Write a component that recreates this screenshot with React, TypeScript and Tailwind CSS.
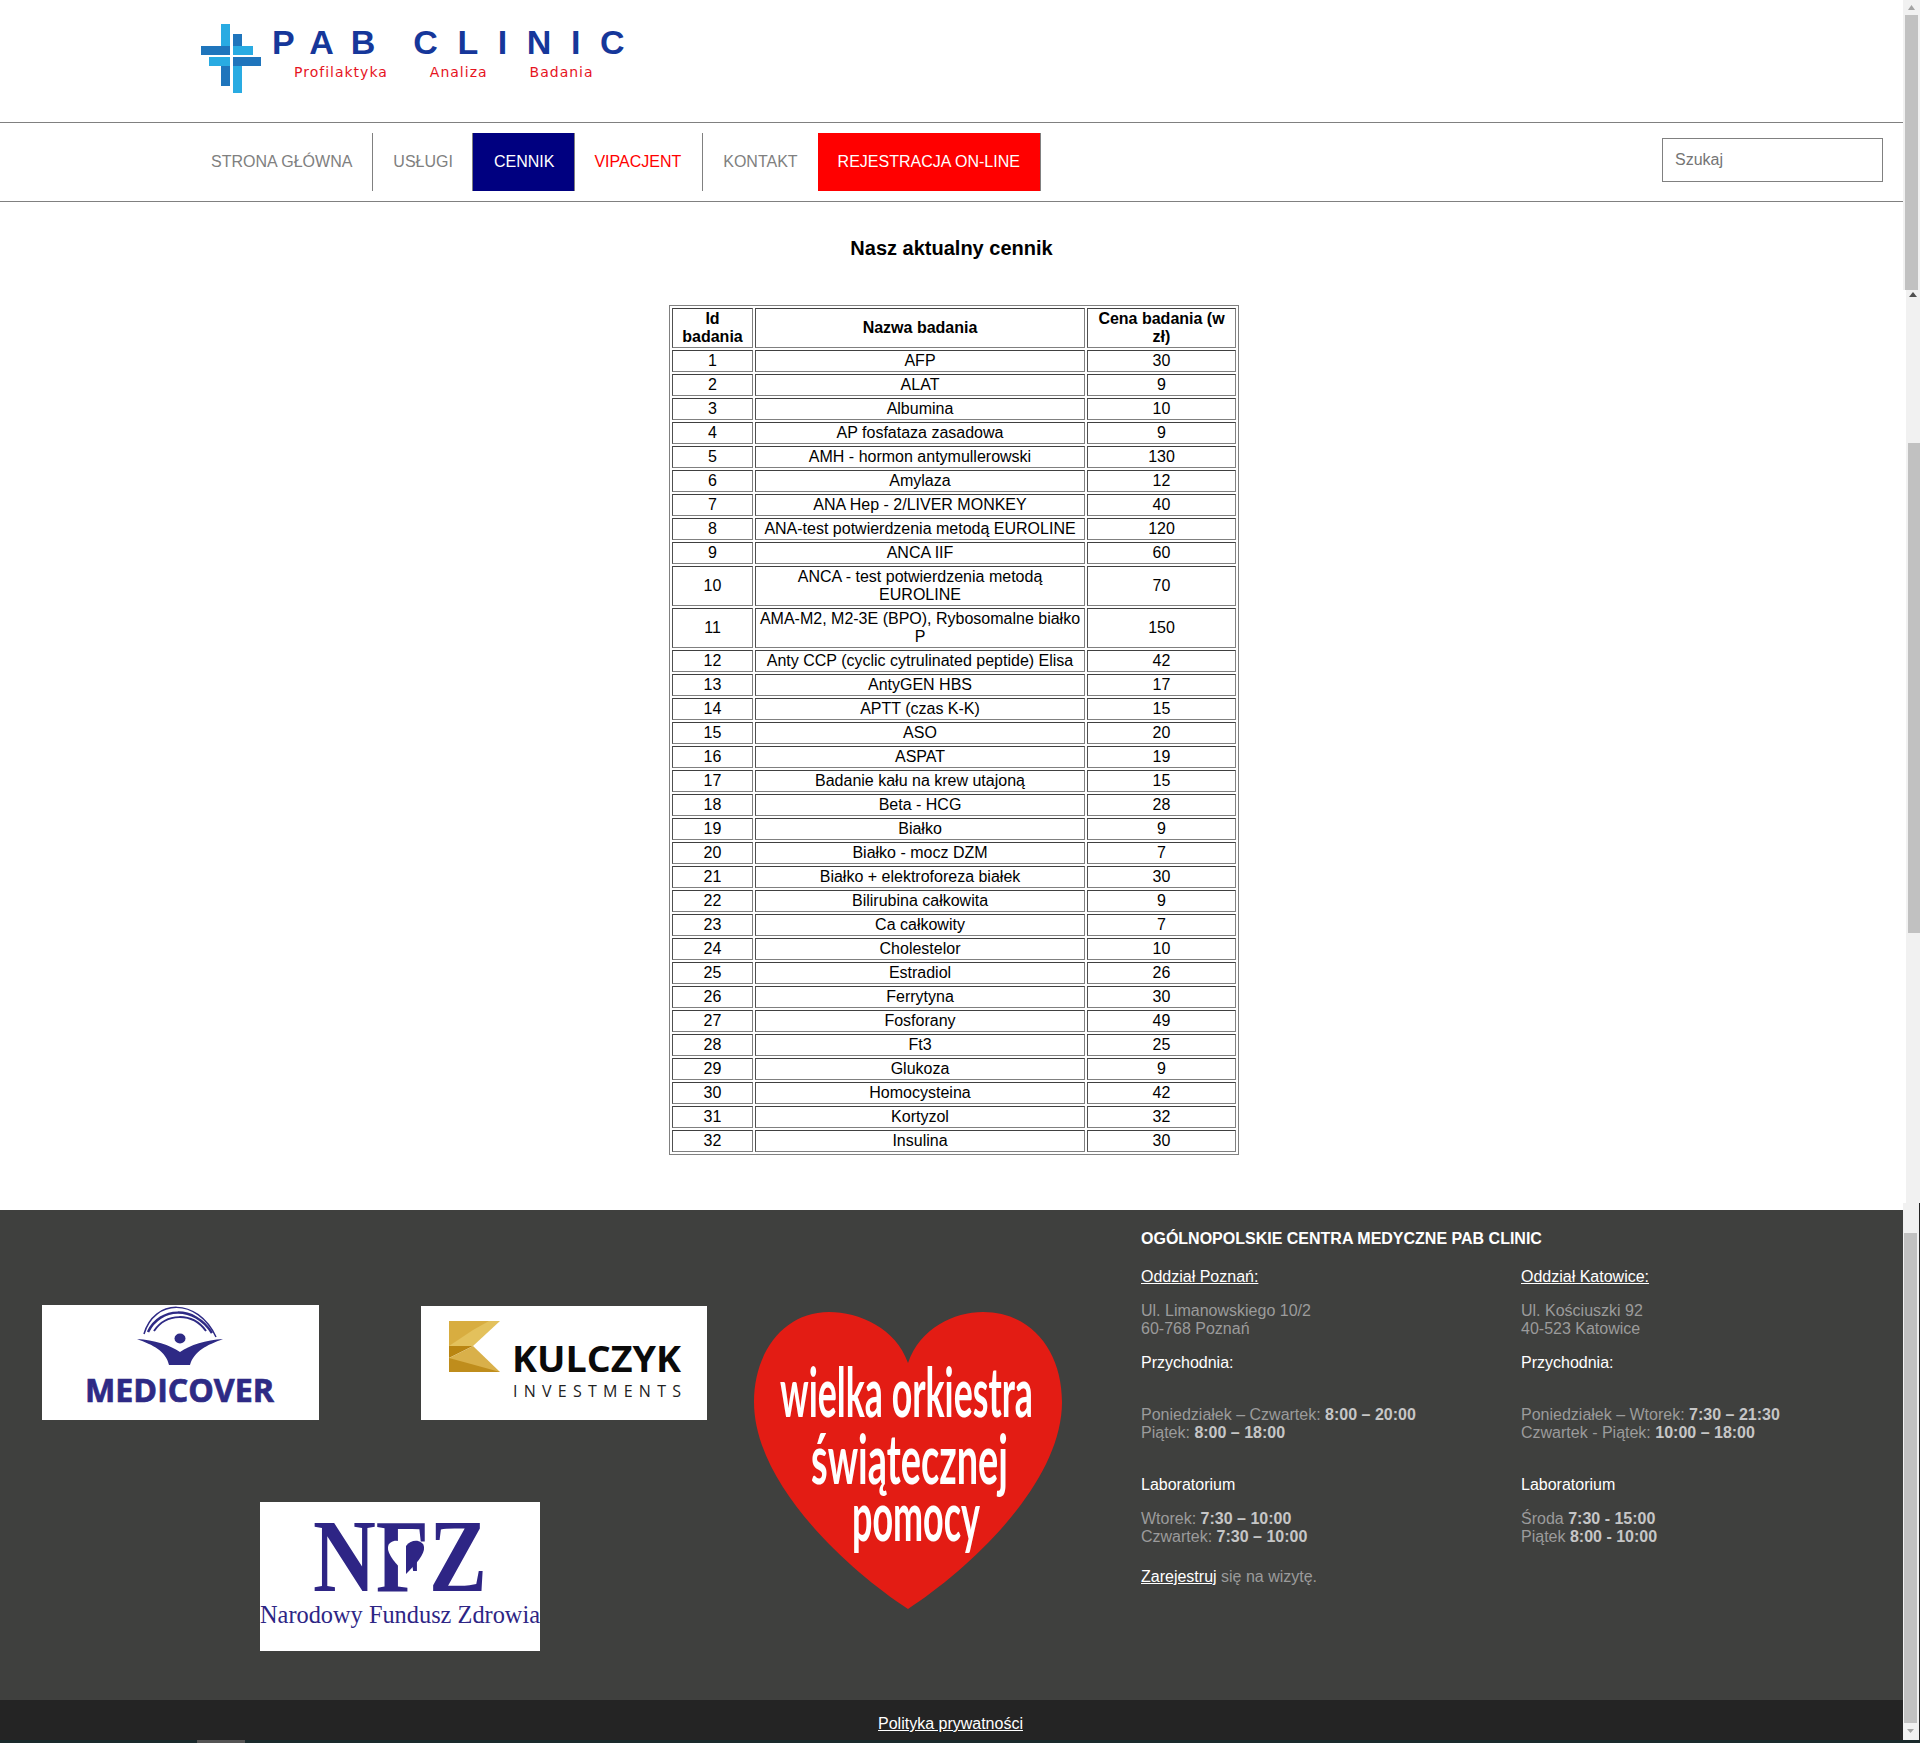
const rows: [string, number][] = [
  ["AFP", 30],
  ["ALAT", 9],
  ["Albumina", 10],
  ["AP fosfataza zasadowa", 9],
  ["AMH - hormon antymullerowski", 130],
  ["Amylaza", 12],
  ["ANA Hep - 2/LIVER MONKEY", 40],
  ["ANA-test potwierdzenia metodą EUROLINE", 120],
  ["ANCA IIF", 60],
  ["ANCA - test potwierdzenia metodą EUROLINE", 70],
  ["AMA-M2, M2-3E (BPO), Rybosomalne białko P", 150],
  ["Anty CCP (cyclic cytrulinated peptide) Elisa", 42],
  ["AntyGEN HBS", 17],
  ["APTT (czas K-K)", 15],
  ["ASO", 20],
  ["ASPAT", 19],
  ["Badanie kału na krew utajoną", 15],
  ["Beta - HCG", 28],
  ["Białko", 9],
  ["Białko - mocz DZM", 7],
  ["Białko + elektroforeza białek", 30],
  ["Bilirubina całkowita", 9],
  ["Ca całkowity", 7],
  ["Cholestelor", 10],
  ["Estradiol", 26],
  ["Ferrytyna", 30],
  ["Fosforany", 49],
  ["Ft3", 25],
  ["Glukoza", 9],
  ["Homocysteina", 42],
  ["Kortyzol", 32],
  ["Insulina", 30],
];

const cell =
  "border border-[#808080] border-t-[#404040] border-l-[#505050] p-px text-center";

const CrossLogo = () => (
  <svg width="60" height="69" viewBox="0 0 60 69" className="shrink-0">
    <rect x="20" y="0" width="9" height="22" fill="#29abe2" />
    <rect x="32" y="10" width="9" height="12" fill="#1f75bc" />
    <rect x="0" y="22" width="29" height="9" fill="#1f75bc" />
    <rect x="32" y="22" width="20" height="9" fill="#29abe2" />
    <rect x="8" y="33" width="21" height="9" fill="#29abe2" />
    <rect x="32" y="33" width="28" height="9" fill="#1f75bc" />
    <rect x="20" y="42" width="9" height="20" fill="#1f75bc" />
    <rect x="32" y="42" width="9" height="27" fill="#29abe2" />
  </svg>
);

const Medicover = () => (
  <svg width="277" height="115" viewBox="0 0 277 115" className="bg-white">
    <g fill="none" stroke="#2e2a85">
      <path d="M102 29 C112 -6 155 -8 174 32" strokeWidth="1.5" />
      <path d="M106 27 C118 2 152 0 170 28" strokeWidth="2.5" />
      <path d="M112 26 C124 8 150 7 164 26" strokeWidth="2" />
    </g>
    <ellipse cx="138" cy="33.5" rx="5.5" ry="5" fill="#2e2a85" />
    <path
      d="M95 34 C112 35 128 40 138 47 C148 40 164 35 181 34 C165 40 152 46 148 60 L127 60 C124 46 111 40 95 34Z"
      fill="#2e2a85"
    />
    <text
      x="43"
      y="97"
      textLength="189"
      lengthAdjust="spacingAndGlyphs"
      fontFamily="'Open Sans', sans-serif"
      fontWeight="700"
      fontSize="32"
      fill="#2e2a85"
      stroke="#2e2a85"
      strokeWidth="0.7"
    >
      MEDICOVER
    </text>
  </svg>
);

const Kulczyk = () => (
  <svg width="286" height="114" viewBox="0 0 286 114" className="mt-px bg-white">
    <polygon points="28,15 79,15 52,40 28,40" fill="#e3c15c" />
    <polygon points="28,15 28,40 52,24 68,15" fill="#c9951f" opacity="0.45" />
    <polygon points="28,40 52,40 28,52" fill="#b98512" />
    <polygon points="28,52 52,40 79,66 28,66" fill="#d9b04a" />
    <polygon points="28,52 50,58 79,66 28,66" fill="#bf8d1c" />
    <text
      x="91"
      y="66"
      textLength="169"
      lengthAdjust="spacingAndGlyphs"
      fontFamily="'Open Sans', sans-serif"
      fontWeight="700"
      fontSize="36"
      fill="#0a0a0a"
    >
      KULCZYK
    </text>
    <text
      x="92"
      y="91"
      textLength="168"
      lengthAdjust="spacing"
      fontFamily="'Open Sans', sans-serif"
      fontSize="16"
      fill="#222"
    >
      INVESTMENTS
    </text>
  </svg>
);

const Nfz = () => (
  <svg width="280" height="149" viewBox="0 0 280 149" className="bg-white">
    <text
      x="53"
      y="89"
      textLength="174"
      lengthAdjust="spacingAndGlyphs"
      fontFamily="'Liberation Serif', serif"
      fontWeight="700"
      fontSize="103"
      fill="#2e2585"
    >
      NFZ
    </text>
    <path d="M146 72 C136 62 127 52 128 45 C129 38 140 36 146 44Z" fill="#fff" />
    <path d="M146 72 C156 62 165 52 164 45 C163 38 152 36 146 44Z" fill="#2e2585" />
    <text
      x="0"
      y="121"
      textLength="280"
      lengthAdjust="spacingAndGlyphs"
      fontFamily="'Liberation Serif', serif"
      fontSize="26"
      fill="#2e2585"
    >
      Narodowy Fundusz Zdrowia
    </text>
  </svg>
);

const Heart = () => (
  <svg width="309" height="298" viewBox="0 0 309 298" className="shrink-0">
    <path
      d="M154 51 C142 16 105 0 75 0 C30 0 0 40 0 90 C0 170 90 255 154 297 C218 255 308 170 308 90 C308 40 278 0 229 0 C200 0 166 16 154 51Z"
      fill="#e31c14"
    />
    <g fill="#fff" fontFamily="Lato, sans-serif" fontWeight="700" fontSize="68">
      <text x="26" y="105" textLength="253" lengthAdjust="spacingAndGlyphs">
        wielka orkiestra
      </text>
      <text x="57" y="172" textLength="197" lengthAdjust="spacingAndGlyphs">
        świątecznej
      </text>
      <text x="98" y="229" textLength="128" lengthAdjust="spacingAndGlyphs">
        pomocy
      </text>
    </g>
  </svg>
);

const Hours = ({ label, value }: { label: string; value: string }) => (
  <p>
    {label} <b className="text-[#c6c6c6]">{value}</b>
  </p>
);

const Branch = (props: {
  name: string;
  street: string;
  city: string;
  clinic: [string, string][];
  lab: [string, string][];
}) => (
  <div className="w-[380px] text-[#9b9b9b]">
    <p className="text-white underline">{props.name}</p>
    <p className="mt-4">{props.street}</p>
    <p>{props.city}</p>
    <p className="mt-4 text-white">Przychodnia:</p>
    <div className="mt-[34px]">
      {props.clinic.map(([label, value]) => (
        <Hours key={label} label={label} value={value} />
      ))}
    </div>
    <p className="mt-[34px] text-white">Laboratorium</p>
    <div className="mt-4">
      {props.lab.map(([label, value]) => (
        <Hours key={label} label={label} value={value} />
      ))}
    </div>
  </div>
);

const App = () => {
  return (
    <div className="h-[1743px] overflow-hidden bg-white text-base leading-[18px] text-black [font-family:'Liberation_Sans',Arial,sans-serif]">
      <div className="flex h-[1740px]">
        <main className="w-[1903px] shrink-0">
          <header className="h-[123px] border-b border-[#808080] pl-[201px] pt-6">
            <div className="flex">
              <CrossLogo />
              <div className="ml-[11px]">
                <p className="mt-px text-[34px] leading-[34px] font-bold text-[#16379a]">
                  <span className="tracking-[17px]">PAB</span>
                  <span className="ml-[21px] tracking-[19.6px]">CLINIC</span>
                </p>
                <div className="mt-[5px] flex text-[14px] leading-4 tracking-[1px] text-[#e6141e] [font-family:'DejaVu_Sans',sans-serif]">
                  <span className="ml-[22px]">Profilaktyka</span>
                  <span className="ml-[42px]">Analiza</span>
                  <span className="ml-[42px]">Badania</span>
                </div>
              </div>
            </div>
          </header>

          <nav className="flex h-[79px] justify-between border-b border-[#808080] pl-[190px] pr-5 pt-[10px]">
            <ul className="flex h-[58px] leading-[58px]">
              <li className="border-r border-[#808080] pl-[21px] pr-5 text-[#808080]">STRONA GŁÓWNA</li>
              <li className="pl-5 pr-[19px] text-[#808080]">USŁUGI</li>
              <li className="border-x border-[#808080] bg-[#000080] pl-[21px] pr-5 text-white">CENNIK</li>
              <li className="border-r border-[#808080] pl-[19px] pr-[21px] text-[#ff0000]">VIPACJENT</li>
              <li className="px-5 text-[#808080]">KONTAKT</li>
              <li className="border-r border-[#808080] bg-[#ff0000] px-5 text-white">REJESTRACJA ON-LINE</li>
            </ul>
            <input
              className="mt-[5px] h-[44px] w-[221px] border border-[#808080] pl-3 outline-none placeholder:text-[#757575]"
              placeholder="Szukaj"
            />
          </nav>

          <section className="h-[1008px] pt-[35px]">
            <h3 className="text-center text-[20px] leading-[23px] font-bold">Nasz aktualny cennik</h3>
            <table className="ml-[669px] mt-[45px] w-[570px] table-fixed border-separate border-spacing-[2px] border border-[#808080]">
              <colgroup>
                <col className="w-[81px]" />
                <col className="w-[330px]" />
                <col className="w-[149px]" />
              </colgroup>
              <thead>
                <tr>
                  <th className={cell}>Id badania</th>
                  <th className={cell}>Nazwa badania</th>
                  <th className={cell}>Cena badania (w zł)</th>
                </tr>
              </thead>
              <tbody>
                {rows.map(([name, price], i) => (
                  <tr key={name}>
                    <td className={cell}>{i + 1}</td>
                    <td className={cell}>{name}</td>
                    <td className={cell}>{price}</td>
                  </tr>
                ))}
              </tbody>
            </table>
          </section>

          <footer className="flex h-[490px] bg-[#3f403e]">
            <div className="w-[754px] shrink-0 pl-[42px] pt-[95px]">
              <div className="flex items-start gap-[102px]">
                <Medicover />
                <Kulczyk />
              </div>
              <div className="ml-[218px] mt-[82px] w-[280px]">
                <Nfz />
              </div>
            </div>
            <div className="mt-[102px]">
              <Heart />
            </div>
            <div className="ml-[78px] pt-5">
              <p className="font-bold text-white">OGÓLNOPOLSKIE CENTRA MEDYCZNE PAB CLINIC</p>
              <div className="mt-5 flex">
                <Branch
                  name="Oddział Poznań:"
                  street="Ul. Limanowskiego 10/2"
                  city="60-768 Poznań"
                  clinic={[
                    ["Poniedziałek – Czwartek:", "8:00 – 20:00"],
                    ["Piątek:", "8:00 – 18:00"],
                  ]}
                  lab={[
                    ["Wtorek:", "7:30 – 10:00"],
                    ["Czwartek:", "7:30 – 10:00"],
                  ]}
                />
                <Branch
                  name="Oddział Katowice:"
                  street="Ul. Kościuszki 92"
                  city="40-523 Katowice"
                  clinic={[
                    ["Poniedziałek – Wtorek:", "7:30 – 21:30"],
                    ["Czwartek - Piątek:", "10:00 – 18:00"],
                  ]}
                  lab={[
                    ["Środa", "7:30 - 15:00"],
                    ["Piątek", "8:00 - 10:00"],
                  ]}
                />
              </div>
              <p className="mt-[22px] text-[#9b9b9b]">
                <span className="text-white underline">Zarejestruj</span> się na wizytę.
              </p>
            </div>
          </footer>

          <div className="h-[40px] bg-[#242424] pr-[2px] pt-[15px] text-center text-white underline">Polityka prywatności</div>
        </main>

        {/* three stacked scrollbars from the page capture */}
        <aside className="w-[17px] shrink-0">
          <div className="h-[290px] bg-[#f1f1f1] pl-[2px]">
            <svg width="13" height="15" viewBox="0 0 13 15" className="block">
              <polygon points="3,10 6.5,5 10,10" fill="#a3a3a3" />
            </svg>
            <div className="h-[275px] w-[13px] bg-[#c1c1c1]" />
          </div>
          <div className="ml-[3px] h-[913px] bg-[#f1f1f1]">
            <svg width="14" height="12" viewBox="0 0 14 12" className="block">
              <polygon points="3,7 7,2 11,7" fill="#505050" />
            </svg>
            <div className="ml-[2px] mt-[141px] h-[490px] w-[12px] bg-[#c1c1c1]" />
          </div>
          <div className="h-[537px] border-r border-[#242424] bg-[#f1f1f1] pl-px pt-[30px]">
            <div className="h-[490px] w-[13px] bg-[#c1c1c1]" />
            <svg width="13" height="17" viewBox="0 0 13 17" className="block">
              <polygon points="3,6 10,6 6.5,10" fill="#a3a3a3" />
            </svg>
          </div>
        </aside>
      </div>
      <div className="h-[3px] bg-[#1a2a2c] pl-[197px]">
        <div className="h-[3px] w-[48px] bg-[#555]" />
      </div>
    </div>
  );
};

export default App;
